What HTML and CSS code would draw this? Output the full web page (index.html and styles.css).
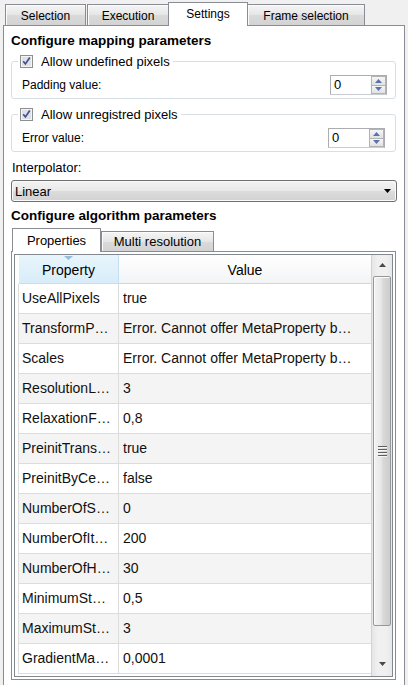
FILE: index.html
```html
<!DOCTYPE html>
<html>
<head>
<meta charset="utf-8">
<link rel="stylesheet" href="styles.css">
</head>
<body>
<div class="tabbar">
  <div class="tab tab-selection">Selection</div>
  <div class="tab tab-execution">Execution</div>
  <div class="tab tab-settings active">Settings</div>
  <div class="tab tab-frame">Frame selection</div>
</div>
<div class="panel">
  <div class="title">Configure mapping parameters</div>
  <fieldset class="group">
    <legend class="check">
      <svg class="cb" width="13" height="13" viewBox="0 0 13 13"><rect x="0.5" y="0.5" width="12" height="12" fill="#f4f4f4" stroke="#8e8f8f"/><rect x="2" y="2" width="9" height="9" fill="#dfe1e5"/><path d="M3.2 6.3 L5.4 8.9 L9.8 2.6" fill="none" stroke="#3d5193" stroke-width="1.7"/></svg>
      <span>Allow undefined pixels</span>
    </legend>
    <div class="field">
      <span class="field-label">Padding value:</span>
      <div class="spin">
        <span class="spin-value">0</span>
        <div class="spin-btns">
          <div class="sb"><svg width="7" height="4" viewBox="0 0 7 4"><path d="M0 4 L3.5 0 L7 4Z" fill="#5873ad"/></svg></div>
          <div class="sb"><svg width="7" height="4" viewBox="0 0 7 4"><path d="M0 0 L3.5 4 L7 0Z" fill="#5873ad"/></svg></div>
        </div>
      </div>
    </div>
  </fieldset>
  <fieldset class="group group-2">
    <legend class="check">
      <svg class="cb" width="13" height="13" viewBox="0 0 13 13"><rect x="0.5" y="0.5" width="12" height="12" fill="#f4f4f4" stroke="#8e8f8f"/><rect x="2" y="2" width="9" height="9" fill="#dfe1e5"/><path d="M3.2 6.3 L5.4 8.9 L9.8 2.6" fill="none" stroke="#3d5193" stroke-width="1.7"/></svg>
      <span>Allow unregistred pixels</span>
    </legend>
    <div class="field">
      <span class="field-label">Error value:</span>
      <div class="spin spin-2">
        <span class="spin-value">0</span>
        <div class="spin-btns">
          <div class="sb"><svg width="7" height="4" viewBox="0 0 7 4"><path d="M0 4 L3.5 0 L7 4Z" fill="#5873ad"/></svg></div>
          <div class="sb"><svg width="7" height="4" viewBox="0 0 7 4"><path d="M0 0 L3.5 4 L7 0Z" fill="#5873ad"/></svg></div>
        </div>
      </div>
    </div>
  </fieldset>
  <div class="label-line">Interpolator:</div>
  <div class="combo">
    <span>Linear</span>
    <svg width="7" height="4" viewBox="0 0 7 4"><path d="M0 0 L7 0 L3.5 4Z" fill="#000"/></svg>
  </div>
  <div class="title title-2">Configure algorithm parameters</div>
  <div class="subtabs">
    <div class="subtab subtab-props active">Properties</div>
    <div class="subtab subtab-multi">Multi resolution</div>
  </div>
  <div class="pane">
    <div class="table">
      <div class="table-main">
        <div class="thead">
          <div class="th th-sorted">
            <svg class="sort" width="9" height="4" viewBox="0 0 9 4"><path d="M0 0 L9 0 L4.5 4Z" fill="#95bde0"/></svg>
            Property
          </div>
          <div class="th">Value</div>
        </div>
        <div class="row"><div class="cell">UseAllPixels</div><div class="cell cell-val">true</div></div>
        <div class="row alt"><div class="cell">TransformP…</div><div class="cell cell-val">Error. Cannot offer MetaProperty b…</div></div>
        <div class="row"><div class="cell">Scales</div><div class="cell cell-val">Error. Cannot offer MetaProperty b…</div></div>
        <div class="row alt"><div class="cell">ResolutionL…</div><div class="cell cell-val">3</div></div>
        <div class="row"><div class="cell">RelaxationF…</div><div class="cell cell-val">0,8</div></div>
        <div class="row alt"><div class="cell">PreinitTrans…</div><div class="cell cell-val">true</div></div>
        <div class="row"><div class="cell">PreinitByCe…</div><div class="cell cell-val">false</div></div>
        <div class="row alt"><div class="cell">NumberOfS…</div><div class="cell cell-val">0</div></div>
        <div class="row"><div class="cell">NumberOfIt…</div><div class="cell cell-val">200</div></div>
        <div class="row alt"><div class="cell">NumberOfH…</div><div class="cell cell-val">30</div></div>
        <div class="row"><div class="cell">MinimumSt…</div><div class="cell cell-val">0,5</div></div>
        <div class="row alt"><div class="cell">MaximumSt…</div><div class="cell cell-val">3</div></div>
        <div class="row"><div class="cell">GradientMa…</div><div class="cell cell-val">0,0001</div></div>
      </div>
      <div class="vscroll">
        <div class="sbtn sbtn-up"><svg width="7" height="4" viewBox="0 0 7 4"><path d="M0 4 L3.5 0 L7 4Z" fill="#4a4a4a"/></svg></div>
        <div class="thumb">
          <div class="grip"><i></i><i></i><i></i><i></i></div>
        </div>
        <div class="track-fill"></div>
        <div class="sbtn sbtn-down"><svg width="7" height="4" viewBox="0 0 7 4"><path d="M0 0 L7 0 L3.5 4Z" fill="#4a4a4a"/></svg></div>
      </div>
    </div>
  </div>
</div>
</body>
</html>
```

FILE: styles.css
```css
* { box-sizing: border-box; }
html, body { margin: 0; padding: 0; }
body {
  width: 408px;
  height: 685px;
  overflow: hidden;
  background: #f0f0f0;
  font-family: "Liberation Sans", Arial, sans-serif;
  font-size: 12px;
  color: #000;
}

/* main tabs */
.tabbar {
  display: flex;
  align-items: flex-end;
  height: 25px;
  padding-left: 5px;
}
.tab {
  height: 21px;
  border: 1px solid #898c95;
  border-bottom: none;
  background: linear-gradient(#f5f5f5, #e6e6e6 50%, #dadada 51%, #d3d3d3);
  box-shadow: inset 1px 1px 0 #fbfbfb;
  display: flex;
  align-items: center;
  justify-content: center;
  font-size: 12px;
  padding-top: 1px;
  margin-right: 1px;
}
.tab.active {
  height: 24px;
  margin-bottom: -1px;
  background: #fff;
  box-shadow: none;
  position: relative;
  z-index: 1;
}
.tab-selection { width: 81px; }
.tab-execution { width: 82px; }
.tab-settings { width: 80px; margin-left: -2px; margin-right: -1px; padding-top: 0; padding-bottom: 2px; }
.tab-frame { width: 118px; }

.panel {
  margin: 0 3px;
  height: 664px;
  border: 1px solid #898c95;
  background: #fff;
  padding: 7px 8px 0 7px;
  display: flex;
  flex-direction: column;
}

.title {
  font-weight: bold;
  font-size: 13.5px;
  line-height: 16px;
}
.title-2 { margin-top: 6px; }

/* group boxes */
.group {
  margin: 5px 0 0;
  min-width: 0;
  border: 1px solid #d5dfe5;
  border-radius: 3px;
  padding: 6px 8px 3px 6px;
}
.group-2 { margin-top: 8px; }
.check {
  display: flex;
  align-items: center;
  gap: 8px;
  padding: 0 3px 0 2px;
  height: 15px;
  font-size: 13px;
  line-height: 15px;
}
.cb { display: block; flex: none; }

.field {
  display: flex;
  align-items: center;
  justify-content: space-between;
  height: 20px;
}
.field-label {
  margin-left: 4px;
  font-size: 12px;
}
.spin {
  width: 57px;
  height: 20px;
  border: 1px solid #abadb3;
  border-bottom-color: #c9ccd2;
  background: #fff;
  display: flex;
}
.spin-2 { margin-right: 2px; }
.spin-value {
  flex: 1;
  padding-left: 3px;
  font-size: 13px;
  line-height: 18px;
}
.spin-btns {
  width: 15px;
  display: flex;
  flex-direction: column;
}
.sb {
  flex: 1;
  border: 1px solid #b3b3b3;
  background: linear-gradient(#f6f6f6, #e1e1e1);
  display: flex;
  align-items: center;
  justify-content: center;
}
.sb + .sb { border-top: none; }
.sb svg { display: block; }

.label-line {
  margin: 8px 0 0 1px;
  font-size: 13px;
  line-height: 15px;
}
.combo {
  margin: 5px -1px 0 0;
  height: 22px;
  border: 1px solid #707070;
  border-radius: 3px;
  background: linear-gradient(#f3f3f3, #e9e9e9 50%, #dcdcdc 51%, #d2d2d2);
  box-shadow: inset 0 0 0 1px #fafafa;
  display: flex;
  align-items: center;
  justify-content: space-between;
  padding: 0 5px 0 3px;
  font-size: 13px;
}
.combo svg { display: block; }

/* sub tabs */
.subtabs {
  display: flex;
  align-items: flex-end;
  height: 23px;
  margin-top: 4px;
  padding-left: 1px;
}
.subtab {
  height: 20px;
  border: 1px solid #898c95;
  border-bottom: none;
  background: linear-gradient(#f5f5f5, #e6e6e6 50%, #dadada 51%, #d3d3d3);
  box-shadow: inset 1px 1px 0 #fbfbfb;
  display: flex;
  align-items: center;
  justify-content: center;
  font-size: 13px;
}
.subtab.active {
  height: 24px;
  margin-bottom: -1px;
  background: #fff;
  box-shadow: none;
  position: relative;
  z-index: 1;
}
.subtab-props { width: 89px; }
.subtab-multi { width: 113px; }

.pane {
  height: 429px;
  border: 1px solid #898c95;
  padding: 2px;
  background: #fff;
}
.table {
  height: 423px;
  border: 1px solid #828790;
  display: flex;
  background: #fff;
}
.table-main {
  flex: 1;
  padding-left: 3px;
  display: flex;
  flex-direction: column;
  overflow: hidden;
}
.thead {
  display: grid;
  grid-template-columns: 100px 252px;
  height: 29px;
  margin-left: 1px;
  flex: none;
}
.th {
  display: flex;
  align-items: center;
  justify-content: center;
  font-size: 14px;
  padding-top: 2px;
  background: linear-gradient(#ffffff, #f3f4f6);
  border-bottom: 1px solid #d5d5d5;
}
.th-sorted {
  position: relative;
  background: linear-gradient(#e8f5fc, #d8edf9);
  border-right: 1px solid #c3dff0;
  border-bottom-color: #c3dff0;
}
.sort {
  position: absolute;
  top: 1px;
  left: 45px;
  display: block;
}
.row {
  display: grid;
  grid-template-columns: 100px 252px;
  height: 30px;
  flex: none;
  border-left: 1px solid #dcdcdc;
  border-bottom: 1px solid #dcdcdc;
  background: #fff;
  font-size: 14px;
  line-height: 29px;
  color: #111;
}
.row.alt { background: #f4f4f4; }
.cell {
  padding-left: 3px;
  white-space: nowrap;
  overflow: hidden;
  border-right: 1px solid #dcdcdc;
}
.cell-val {
  padding-left: 4px;
  border-right: none;
}

/* scrollbar */
.vscroll {
  width: 21px;
  flex: none;
  display: flex;
  flex-direction: column;
  background: linear-gradient(to right, #e6e6e6, #f0f0f0 30%, #f0f0f0 70%, #e8e8e8);
  border-left: 1px solid #d2d2d2;
  padding: 0 1px 0 1px;
}
.sbtn {
  display: flex;
  align-items: center;
  justify-content: center;
  flex: none;
}
.sbtn svg { display: block; }
.sbtn-up { height: 20px; }
.sbtn-down { height: 24px; }
.thumb {
  margin-top: 1px;
  height: 350px;
  flex: none;
  border: 1px solid #979797;
  border-radius: 2px;
  background: linear-gradient(to right, #f3f3f3, #e7e7e7 45%, #d9d9d9 55%, #cdcdcd);
  box-shadow: inset 1px 1px 0 #fbfbfb;
  display: flex;
  align-items: center;
  justify-content: center;
}
.track-fill { flex: 1; }
.grip {
  display: flex;
  flex-direction: column;
  gap: 1px;
  width: 9px;
}
.grip i {
  display: block;
  height: 2px;
  border-top: 1px solid #5e5e5e;
  border-bottom: 1px solid #f6f6f6;
}
```
